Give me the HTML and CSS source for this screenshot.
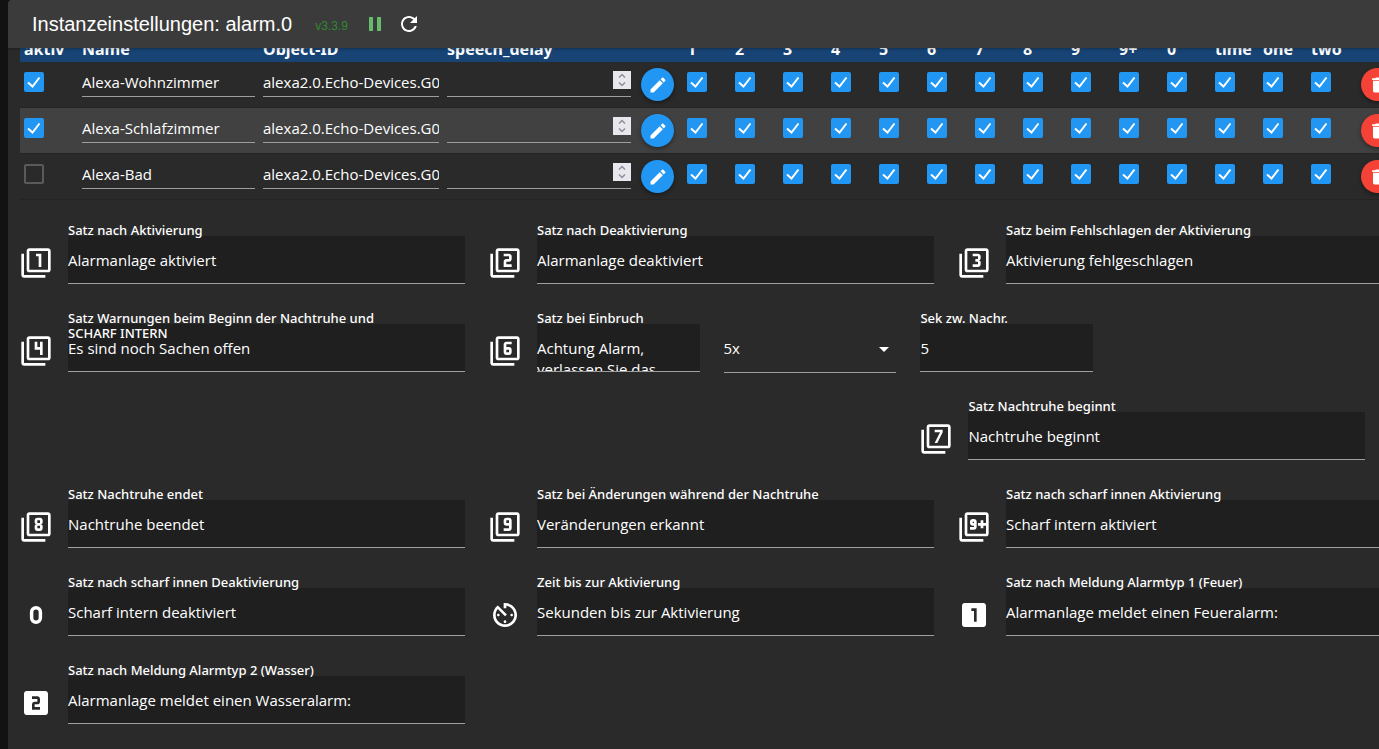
FILE: index.html
```html
<!DOCTYPE html>
<html lang="de">
<head>
<meta charset="utf-8">
<title>Instanzeinstellungen: alarm.0</title>
<link rel="stylesheet" href="styles.css">
</head>
<body>
<svg class="sprite" aria-hidden="true">
  <symbol id="frame" viewBox="0 0 24 24"><path d="M3 5H1v16c0 1.100.9 2 2 2h16v-2H3V5zm18-4H7c-1.100 0-2 .9-2 2v14c0 1.100.9 2 2 2h14c1.100 0 2-.9 2-2V3c0-1.100-.9-2-2-2zm0 16H7V3h14v14z"/></symbol>
  <symbol id="pen" viewBox="0 0 24 24"><path d="M3 17.250V21h3.750L17.810 9.940l-3.750-3.750L3 17.250zM20.710 7.040c.39-.39.39-1.020 0-1.410l-2.340-2.340c-.39-.39-1.020-.39-1.410 0l-1.830 1.830 3.750 3.750 1.830-1.830z"/></symbol>
  <symbol id="trash" viewBox="0 0 24 24"><path d="M6 19c0 1.100.9 2 2 2h8c1.100 0 2-.9 2-2V7H6v12zM19 4h-3.500l-1-1h-5l-1 1H5v2h14V4z"/></symbol>
  <symbol id="spin" viewBox="0 0 18 18"><path d="M6 6.500L9 3.500l3 3M6 11.500l3 3 3-3" fill="none" stroke="#8f8f9d" stroke-width="1.500"/></symbol>
</svg>
<div class="panel">
  <header class="bar">
    <h1>Instanzeinstellungen: alarm.0</h1>
    <span class="version">v3.3.9</span>
    <button class="tool pause" type="button" aria-label="Pause"><svg viewBox="0 0 24 24"><path d="M6 19h4V5H6v14zm8-14v14h4V5h-4z"/></svg></button>
    <button class="tool" type="button" aria-label="Neu laden"><svg viewBox="0 0 24 24"><path d="M17.650 6.350C16.200 4.900 14.210 4 12 4c-4.420 0-7.990 3.580-7.990 8s3.570 8 7.990 8c3.730 0 6.840-2.550 7.730-6h-2.080c-.82 2.330-3.040 4-5.650 4-3.310 0-6-2.690-6-6s2.690-6 6-6c1.660 0 3.140.69 4.220 1.780L13 11h7V4l-2.350 2.350z"/></svg></button>
  </header>
  <main class="scroll">
    <div class="content">
      <table>
        <colgroup><col class="c-active"><col class="c-name"><col class="c-object"><col><col class="c-small" span="15"><col class="c-last"></colgroup>
        <thead>
          <tr><th>aktiv</th><th>Name</th><th>Object-ID</th><th>speech_delay</th><th></th><th>1</th><th>2</th><th>3</th><th>4</th><th>5</th><th>6</th><th>7</th><th>8</th><th>9</th><th>9+</th><th>0</th><th>time</th><th>one</th><th>two</th><th></th></tr>
        </thead>
        <tbody>
          <tr>
            <td><input type="checkbox" aria-label="aktiv" checked></td>
            <td><input class="cell" type="text" aria-label="Name" value="Alexa-Wohnzimmer"></td>
            <td><input class="cell" type="text" aria-label="Object-ID" value="alexa2.0.Echo-Devices.G090"></td>
            <td><div class="num"><input class="cell" type="text" inputmode="numeric" aria-label="speech_delay"><svg class="spin"><use href="#spin"/></svg></div></td>
            <td><button class="round" type="button" aria-label="Bearbeiten"><svg><use href="#pen"/></svg></button></td>
            <td><input type="checkbox" aria-label="1" checked></td><td><input type="checkbox" aria-label="2" checked></td><td><input type="checkbox" aria-label="3" checked></td><td><input type="checkbox" aria-label="4" checked></td><td><input type="checkbox" aria-label="5" checked></td><td><input type="checkbox" aria-label="6" checked></td><td><input type="checkbox" aria-label="7" checked></td><td><input type="checkbox" aria-label="8" checked></td><td><input type="checkbox" aria-label="9" checked></td><td><input type="checkbox" aria-label="9+" checked></td><td><input type="checkbox" aria-label="0" checked></td><td><input type="checkbox" aria-label="time" checked></td><td><input type="checkbox" aria-label="one" checked></td><td><input type="checkbox" aria-label="two" checked></td>
            <td><button class="round delete" type="button" aria-label="Löschen"><svg><use href="#trash"/></svg></button></td>
          </tr>
          <tr>
            <td><input type="checkbox" aria-label="aktiv" checked></td>
            <td><input class="cell" type="text" aria-label="Name" value="Alexa-Schlafzimmer"></td>
            <td><input class="cell" type="text" aria-label="Object-ID" value="alexa2.0.Echo-Devices.G090"></td>
            <td><div class="num"><input class="cell" type="text" inputmode="numeric" aria-label="speech_delay"><svg class="spin"><use href="#spin"/></svg></div></td>
            <td><button class="round" type="button" aria-label="Bearbeiten"><svg><use href="#pen"/></svg></button></td>
            <td><input type="checkbox" aria-label="1" checked></td><td><input type="checkbox" aria-label="2" checked></td><td><input type="checkbox" aria-label="3" checked></td><td><input type="checkbox" aria-label="4" checked></td><td><input type="checkbox" aria-label="5" checked></td><td><input type="checkbox" aria-label="6" checked></td><td><input type="checkbox" aria-label="7" checked></td><td><input type="checkbox" aria-label="8" checked></td><td><input type="checkbox" aria-label="9" checked></td><td><input type="checkbox" aria-label="9+" checked></td><td><input type="checkbox" aria-label="0" checked></td><td><input type="checkbox" aria-label="time" checked></td><td><input type="checkbox" aria-label="one" checked></td><td><input type="checkbox" aria-label="two" checked></td>
            <td><button class="round delete" type="button" aria-label="Löschen"><svg><use href="#trash"/></svg></button></td>
          </tr>
          <tr>
            <td><input type="checkbox" aria-label="aktiv"></td>
            <td><input class="cell" type="text" aria-label="Name" value="Alexa-Bad"></td>
            <td><input class="cell" type="text" aria-label="Object-ID" value="alexa2.0.Echo-Devices.G090"></td>
            <td><div class="num"><input class="cell" type="text" inputmode="numeric" aria-label="speech_delay"><svg class="spin"><use href="#spin"/></svg></div></td>
            <td><button class="round" type="button" aria-label="Bearbeiten"><svg><use href="#pen"/></svg></button></td>
            <td><input type="checkbox" aria-label="1" checked></td><td><input type="checkbox" aria-label="2" checked></td><td><input type="checkbox" aria-label="3" checked></td><td><input type="checkbox" aria-label="4" checked></td><td><input type="checkbox" aria-label="5" checked></td><td><input type="checkbox" aria-label="6" checked></td><td><input type="checkbox" aria-label="7" checked></td><td><input type="checkbox" aria-label="8" checked></td><td><input type="checkbox" aria-label="9" checked></td><td><input type="checkbox" aria-label="9+" checked></td><td><input type="checkbox" aria-label="0" checked></td><td><input type="checkbox" aria-label="time" checked></td><td><input type="checkbox" aria-label="one" checked></td><td><input type="checkbox" aria-label="two" checked></td>
            <td><button class="round delete" type="button" aria-label="Löschen"><svg><use href="#trash"/></svg></button></td>
          </tr>
        </tbody>
      </table>

      <form class="fields">
        <div class="row">
          <div class="col third">
            <svg class="icon" viewBox="0 0 24 24"><use href="#frame"/><path d="M14 15h2V5h-4v2h2v8z"/></svg>
            <div class="field"><label for="f1">Satz nach Aktivierung</label><input id="f1" type="text" value="Alarmanlage aktiviert"></div>
          </div>
          <div class="col third">
            <svg class="icon" viewBox="0 0 24 24"><use href="#frame"/><path d="M17 13h-4v-2h2c1.100 0 2-.89 2-2V7c0-1.110-.9-2-2-2h-4v2h4v2h-2c-1.100 0-2 .89-2 2v4h6v-2z"/></svg>
            <div class="field"><label for="f2">Satz nach Deaktivierung</label><input id="f2" type="text" value="Alarmanlage deaktiviert"></div>
          </div>
          <div class="col third">
            <svg class="icon" viewBox="0 0 24 24"><use href="#frame"/><path d="M17 13v-1.500c0-.83-.67-1.500-1.500-1.500.83 0 1.500-.67 1.500-1.500V7c0-1.110-.9-2-2-2h-4v2h4v2h-2v2h2v2h-4v2h4c1.100 0 2-.89 2-2z"/></svg>
            <div class="field"><label for="f3">Satz beim Fehlschlagen der Aktivierung</label><input id="f3" type="text" value="Aktivierung fehlgeschlagen"></div>
          </div>
        </div>
        <div class="row">
          <div class="col third">
            <svg class="icon" viewBox="0 0 24 24"><use href="#frame"/><path d="M15 15h2V5h-2v4h-2V5h-2v6h4v4z"/></svg>
            <div class="field"><label for="f4">Satz Warnungen beim Beginn der Nachtruhe und SCHARF INTERN</label><input id="f4" type="text" value="Es sind noch Sachen offen"></div>
          </div>
          <div class="col sixth">
            <svg class="icon" viewBox="0 0 24 24"><use href="#frame"/><path d="M13 15h2c1.100 0 2-.89 2-2v-2c0-1.110-.9-2-2-2h-2V7h4V5h-4c-1.100 0-2 .89-2 2v6c0 1.110.9 2 2 2zm0-4h2v2h-2v-2z"/></svg>
            <div class="field"><label for="f6">Satz bei Einbruch</label><textarea id="f6">Achtung Alarm, verlassen Sie das Gebäude</textarea></div>
          </div>
          <div class="col narrow">
            <div class="field pick"><select aria-label="Wiederholungen"><option>5x</option></select></div>
          </div>
          <div class="col narrow">
            <div class="field"><label for="fs">Sek zw. Nachr.</label><input id="fs" type="text" value="5"></div>
          </div>
        </div>
        <div class="row">
          <div class="col third shifted">
            <svg class="icon" viewBox="0 0 24 24"><use href="#frame"/><path d="M13 15l4-8V5h-6v2h4l-4 8h2z"/></svg>
            <div class="field"><label for="f7">Satz Nachtruhe beginnt</label><input id="f7" type="text" value="Nachtruhe beginnt"></div>
          </div>
        </div>
        <div class="row">
          <div class="col third">
            <svg class="icon" viewBox="0 0 24 24"><use href="#frame"/><path d="M13 15h2c1.100 0 2-.89 2-2v-1.500c0-.83-.67-1.500-1.500-1.500.83 0 1.500-.67 1.500-1.500V7c0-1.110-.9-2-2-2h-2c-1.100 0-2 .89-2 2v1.500c0 .83.67 1.500 1.500 1.500-.83 0-1.500.67-1.500 1.500V13c0 1.110.9 2 2 2zm0-8h2v2h-2V7zm0 4h2v2h-2v-2z"/></svg>
            <div class="field"><label for="f8">Satz Nachtruhe endet</label><input id="f8" type="text" value="Nachtruhe beendet"></div>
          </div>
          <div class="col third">
            <svg class="icon" viewBox="0 0 24 24"><use href="#frame"/><path d="M15 5h-2c-1.100 0-2 .89-2 2v2c0 1.110.9 2 2 2h2v2h-4v2h4c1.100 0 2-.89 2-2V7c0-1.110-.9-2-2-2zm0 4h-2V7h2v2z"/></svg>
            <div class="field"><label for="f9">Satz bei Änderungen während der Nachtruhe</label><input id="f9" type="text" value="Veränderungen erkannt"></div>
          </div>
          <div class="col third">
            <svg class="icon" viewBox="0 0 24 24"><use href="#frame"/><path d="M14 12V8c0-1.110-.9-2-2-2h-1c-1.100 0-2 .89-2 2v1c0 1.110.9 2 2 2h1v1H9v2h3c1.100 0 2-.89 2-2zm-3-3V8h1v1h-1zM21 9h-2V7h-2v2h-2v2h2v2h2v-2h2V9z"/></svg>
            <div class="field"><label for="f10">Satz nach scharf innen Aktivierung</label><input id="f10" type="text" value="Scharf intern aktiviert"></div>
          </div>
        </div>
        <div class="row">
          <div class="col third">
            <svg class="icon" viewBox="0 0 24 24"><rect x="8.700" y="6.600" width="6.600" height="10.800" rx="3.300" fill="none" stroke="#fff" stroke-width="2.600"/></svg>
            <div class="field"><label for="f0">Satz nach scharf innen Deaktivierung</label><input id="f0" type="text" value="Scharf intern deaktiviert"></div>
          </div>
          <div class="col third">
            <svg class="icon" viewBox="0 0 24 24"><path d="M11 17c0 .55.45 1 1 1s1-.45 1-1-.45-1-1-1-1 .45-1 1zm0-14v4h2V5.080c3.390.49 6 3.390 6 6.920 0 3.870-3.130 7-7 7s-7-3.130-7-7c0-1.680.59-3.220 1.580-4.420L12 13l1.410-1.410-6.800-6.800v.02C4.420 6.450 3 9.050 3 12c0 4.970 4.020 9 9 9s9-4.030 9-9-4.030-9-9-9h-1zm7 9c0-.55-.45-1-1-1s-1 .45-1 1 .45 1 1 1 1-.45 1-1zM6 12c0 .55.45 1 1 1s1-.45 1-1-.45-1-1-1-1 .45-1 1z"/></svg>
            <div class="field"><label for="ft">Zeit bis zur Aktivierung</label><input id="ft" type="text" value="Sekunden bis zur Aktivierung"></div>
          </div>
          <div class="col third">
            <svg class="icon" viewBox="0 0 24 24"><path d="M19 3H5c-1.100 0-2 .9-2 2v14c0 1.100.9 2 2 2h14c1.100 0 2-.9 2-2V5c0-1.100-.9-2-2-2zm-5 14h-2V9h-2V7h4v10z"/></svg>
            <div class="field"><label for="fo">Satz nach Meldung Alarmtyp 1 (Feuer)</label><input id="fo" type="text" value="Alarmanlage meldet einen Feueralarm:"></div>
          </div>
        </div>
        <div class="row">
          <div class="col third">
            <svg class="icon" viewBox="0 0 24 24"><path d="M19 3H5c-1.100 0-2 .9-2 2v14c0 1.100.9 2 2 2h14c1.100 0 2-.9 2-2V5c0-1.100-.9-2-2-2zm-4 8c0 1.110-.9 2-2 2h-2v2h4v2H9v-4c0-1.110.9-2 2-2h2V9H9V7h4c1.100 0 2 .89 2 2v2z"/></svg>
            <div class="field"><label for="fw">Satz nach Meldung Alarmtyp 2 (Wasser)</label><input id="fw" type="text" value="Alarmanlage meldet einen Wasseralarm:"></div>
          </div>
        </div>
      </form>
    </div>
  </main>
</div>
</body>
</html>
```

FILE: styles.css
```css
* { box-sizing: border-box; }

body {
  margin: 0;
  padding-left: 8px;
  height: 100vh;
  overflow: hidden;
  background: #121212;
  color: #fff;
  font-family: "Open Sans", "Noto Sans", sans-serif;
  font-size: 15px;
}

button, input, select, textarea {
  margin: 0;
  padding: 0;
  border: 0;
  border-radius: 0;
  background: none;
  color: #fff;
  font: inherit;
}

svg { display: block; fill: #fff; }

.sprite { position: absolute; width: 0; height: 0; }

.panel {
  display: flex;
  flex-direction: column;
  height: 100%;
  overflow: hidden;
  border-top-left-radius: 4px;
  background: #2a2a2a;
}

.bar {
  position: relative;
  z-index: 1;
  display: flex;
  flex: none;
  align-items: center;
  height: 48px;
  padding-left: 24px;
  background: #3b3b3b;
  box-shadow: 0 1px 3px rgba(0, 0, 0, .3);
  font-family: "Liberation Sans", Arial, sans-serif;
}

.bar h1 {
  margin: 0 23px 0 0;
  font-size: 20px;
  font-weight: 400;
  line-height: 24px;
}

.version {
  margin-right: 15px;
  padding-top: 4px;
  color: #2f8a2f;
  font-size: 12px;
}

.tool { width: 24px; height: 24px; margin-right: 10px; }
.pause svg { fill: #66bb6a; }

.scroll { flex: 1; min-height: 0; overflow: hidden; }

/* Content is scrolled slightly, so the column titles sit partly under the bar. */
.content {
  width: calc(100% + 36px);
  margin: -12px 0 0 12px;
}

table {
  width: 100%;
  table-layout: fixed;
  border-spacing: 0;
}

.c-active { width: 58px; }
.c-name { width: 181px; }
.c-object { width: 184px; }
.c-small { width: 48px; }
.c-last { width: 72px; }

th {
  height: 26px;
  padding: 0 4px;
  background: #174475;
  font-family: "Noto Sans", sans-serif;
  font-size: 16px;
  line-height: 26px;
  text-align: left;
}

td {
  height: 46px;
  padding: 0 4px;
  border-bottom: 1px solid #242424;
  vertical-align: top;
}

tbody tr:nth-child(even) { background: #414141; }

input[type="checkbox"] {
  display: block;
  width: 20px;
  height: 20px;
  margin-top: 10px;
  border: 2px solid #5a5a5a;
  border-radius: 2px;
  appearance: none;
}

input[type="checkbox"]:checked {
  border: 0;
  background: #2196f3 url("data:image/svg+xml,%3Csvg xmlns='http://www.w3.org/2000/svg' viewBox='0 0 20 20'%3E%3Cpath d='M4 10.500L8.500 14.500 15.500 5.500' fill='none' stroke='white' stroke-width='2'/%3E%3C/svg%3E");
}

.cell {
  display: block;
  width: 100%;
  height: 30px;
  margin-top: 5px;
  border-bottom: 1px solid #9e9e9e;
}

.num { position: relative; }

.spin {
  position: absolute;
  top: 4px;
  right: 0;
  width: 18px;
  height: 18px;
  background: #e9e7ed;
}

.round {
  display: flex;
  align-items: center;
  justify-content: center;
  width: 33px;
  height: 33px;
  margin: 6px 0 0 2px;
  border-radius: 50%;
  background: #2196f3;
  box-shadow: 0 2px 4px rgba(0, 0, 0, .4);
}

.round svg { width: 20px; height: 20px; }
.round.delete { background: #f44336; }

.fields {
  display: flex;
  flex-direction: column;
  gap: 40px;
  padding-top: 36px;
}

.row { display: flex; height: 48px; }

.col {
  display: flex;
  flex: none;
  gap: 16px;
  padding-right: 24px;
}

.third { width: calc(100% / 3); }
.sixth { width: calc(100% / 6); }
.narrow { width: 14%; }
.shifted { margin-left: 64%; }

.icon {
  flex: none;
  width: 32px;
  height: 32px;
  margin-top: 11px;
}

.field {
  position: relative;
  flex: 1;
  min-width: 0;
}

.field label {
  position: absolute;
  top: -13px;
  left: 0;
  max-width: 330px;
  font-family: "Noto Sans", sans-serif;
  font-size: 13px;
  font-weight: 500;
  line-height: 15px;
}

.field input, .field textarea {
  display: block;
  width: 100%;
  height: 48px;
  border-bottom: 1px solid #9e9e9e;
  background: #1f1f1f;
}

.field textarea {
  padding-top: 14px;
  line-height: 21px;
  overflow: hidden;
  resize: none;
}

.field select {
  display: block;
  width: 100%;
  height: 49px;
  border-bottom: 1px solid #9e9e9e;
  appearance: none;
}

.pick::after {
  content: "";
  position: absolute;
  top: 23px;
  right: 7px;
  border: 5px solid transparent;
  border-top-color: #fff;
  border-bottom: 0;
  pointer-events: none;
}
```
